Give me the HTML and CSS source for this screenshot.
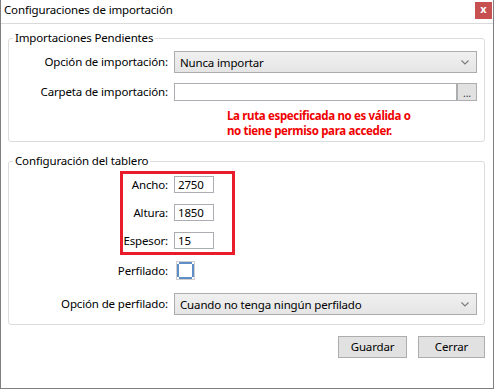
FILE: index.html
```html
<!DOCTYPE html>
<html lang="es">
<head>
<meta charset="utf-8">
<title>Configuraciones de importación</title>
<link rel="stylesheet" href="styles.css">
</head>
<body>
<div class="window">
  <div class="titlebar">
    <span class="title">Configuraciones de importación</span>
    <div class="close">x</div>
  </div>
  <div class="content">
    <fieldset class="group g1">
      <legend>Importaciones Pendientes</legend>
      <div class="row combo-row">
        <label class="lbl">Opción de importación:</label>
        <div class="combo">
          <span>Nunca importar</span>
          <svg class="chev" width="8" height="5" viewBox="0 0 8 5"><polyline points="0.5,0.5 4,4 7.5,0.5" fill="none" stroke="#7a7a7a" stroke-width="1.1"/></svg>
        </div>
      </div>
      <div class="row path-row">
        <label class="lbl">Carpeta de importación:</label>
        <div class="path">
          <div class="textbox path-box"></div>
          <div class="browse">...</div>
        </div>
      </div>
      <div class="error">La ruta especificada no es válida o<br>no tiene permiso para acceder.</div>
    </fieldset>

    <fieldset class="group g2">
      <legend>Configuración del tablero</legend>
      <div class="highlight">
        <div class="hrow">
          <label class="hlbl">Ancho:</label>
          <div class="textbox num">2750</div>
        </div>
        <div class="hrow">
          <label class="hlbl">Altura:</label>
          <div class="textbox num">1850</div>
        </div>
        <div class="hrow">
          <label class="hlbl">Espesor:</label>
          <div class="textbox num">15</div>
        </div>
      </div>
      <div class="row check-row">
        <label class="lbl">Perfilado:</label>
        <svg class="check" width="19" height="19" viewBox="0 0 19 19">
          <rect x="0.5" y="0.5" width="18" height="18" fill="#fff" stroke="#cfcfcf"/>
          <rect x="3" y="1" width="13" height="2" fill="#5f8fc6"/>
          <rect x="3" y="16" width="13" height="2" fill="#5f8fc6"/>
          <rect x="1" y="3" width="2" height="13" fill="#5f8fc6"/>
          <rect x="16" y="3" width="2" height="13" fill="#5f8fc6"/>
        </svg>
      </div>
      <div class="row combo-row profile-row">
        <label class="lbl">Opción de perfilado:</label>
        <div class="combo">
          <span>Cuando no tenga ningún perfilado</span>
          <svg class="chev" width="8" height="5" viewBox="0 0 8 5"><polyline points="0.5,0.5 4,4 7.5,0.5" fill="none" stroke="#7a7a7a" stroke-width="1.1"/></svg>
        </div>
      </div>
    </fieldset>

    <div class="buttons">
      <div class="btn save">Guardar</div>
      <div class="btn close-btn">Cerrar</div>
    </div>
  </div>
</div>
</body>
</html>
```

FILE: styles.css
```css
* { box-sizing: border-box; }

html, body {
  margin: 0;
  padding: 0;
  background: #ffffff;
}

body {
  font-family: "Noto Sans", "Open Sans", sans-serif;
  font-size: 11.5px;
  letter-spacing: -0.15px;
  color: #000;
}

.window {
  width: 494px;
  height: 389px;
  background: #fff;
  border-left: 1px solid #7f7f7f;
  border-right: 1px solid #7f7f7f;
  border-bottom: 1px solid #7f7f7f;
}

.titlebar {
  height: 24px;
  border-bottom: 1px solid #dadada;
  display: flex;
  align-items: flex-start;
  justify-content: space-between;
}

.title {
  padding-left: 3px;
  line-height: 20px;
}

.close {
  width: 17px;
  height: 17px;
  margin-top: 2px;
  margin-right: 1px;
  background: #c75050;
  color: #fff;
  font-weight: bold;
  font-size: 11px;
  line-height: 14px;
  text-align: center;
  letter-spacing: 0;
}

.content {
  padding: 6px 8px 0 7px;
}

.group {
  margin: 0;
  border: 1px solid #dcdcdc;
  border-radius: 3px;
  min-width: 0;
}

.group legend {
  margin-left: 4px;
  padding: 0 2px;
  line-height: 16px;
}

.g1 {
  padding: 5px 7px 3px 0;
}

.g2 {
  margin-top: 11px;
  padding: 2px 7px 9px 0;
}

.row {
  display: flex;
  align-items: center;
}

.lbl {
  width: 159px;
  margin-right: 6px;
  text-align: right;
  line-height: 16px;
  white-space: nowrap;
}

.combo {
  width: 303px;
  height: 22px;
  border: 1px solid #acacac;
  background: linear-gradient(#f0f0f0, #e5e5e5);
  display: flex;
  align-items: center;
  justify-content: space-between;
  padding: 0 7px 0 5px;
}

.chev { display: block; }

.path-row {
  margin-top: 10px;
}

.path {
  display: flex;
  width: 303px;
  height: 18px;
}

.textbox {
  border: 1px solid #abadb3;
  background: #fff;
  height: 100%;
}

.path-box {
  width: 283px;
}

.browse {
  width: 20px;
  border: 1px solid #adadad;
  background: #e1e1e1;
  font-size: 10px;
  line-height: 18px;
  text-align: center;
  color: #333;
  letter-spacing: 0;
}

.error {
  margin: 7px 0 0 218px;
  color: #f00000;
  font-weight: bold;
  letter-spacing: -0.35px;
  line-height: 15px;
}

.highlight {
  margin-left: 111px;
  width: 115px;
  border: 3px solid #e81c2a;
  padding: 2px 18px 3px 0;
}

.hrow {
  display: flex;
  align-items: center;
  height: 17px;
}

.hrow + .hrow {
  margin-top: 11px;
}

.hlbl {
  width: 45px;
  margin-right: 6px;
  text-align: right;
  white-space: nowrap;
}

.num {
  width: 40px;
  height: 17px;
  padding-left: 3px;
  line-height: 15px;
}

.check-row {
  margin-top: 6px;
  height: 19px;
}

.check {
  display: block;
  margin-left: 2px;
}

.profile-row {
  margin-top: 13px;
}

.buttons {
  margin-top: 11px;
  display: flex;
  justify-content: flex-end;
  gap: 11px;
}

.btn {
  height: 22px;
  border: 1px solid #adadad;
  background: #e1e1e1;
  text-align: center;
  line-height: 20px;
}

.save { width: 69px; }
.close-btn { width: 67px; }
```
